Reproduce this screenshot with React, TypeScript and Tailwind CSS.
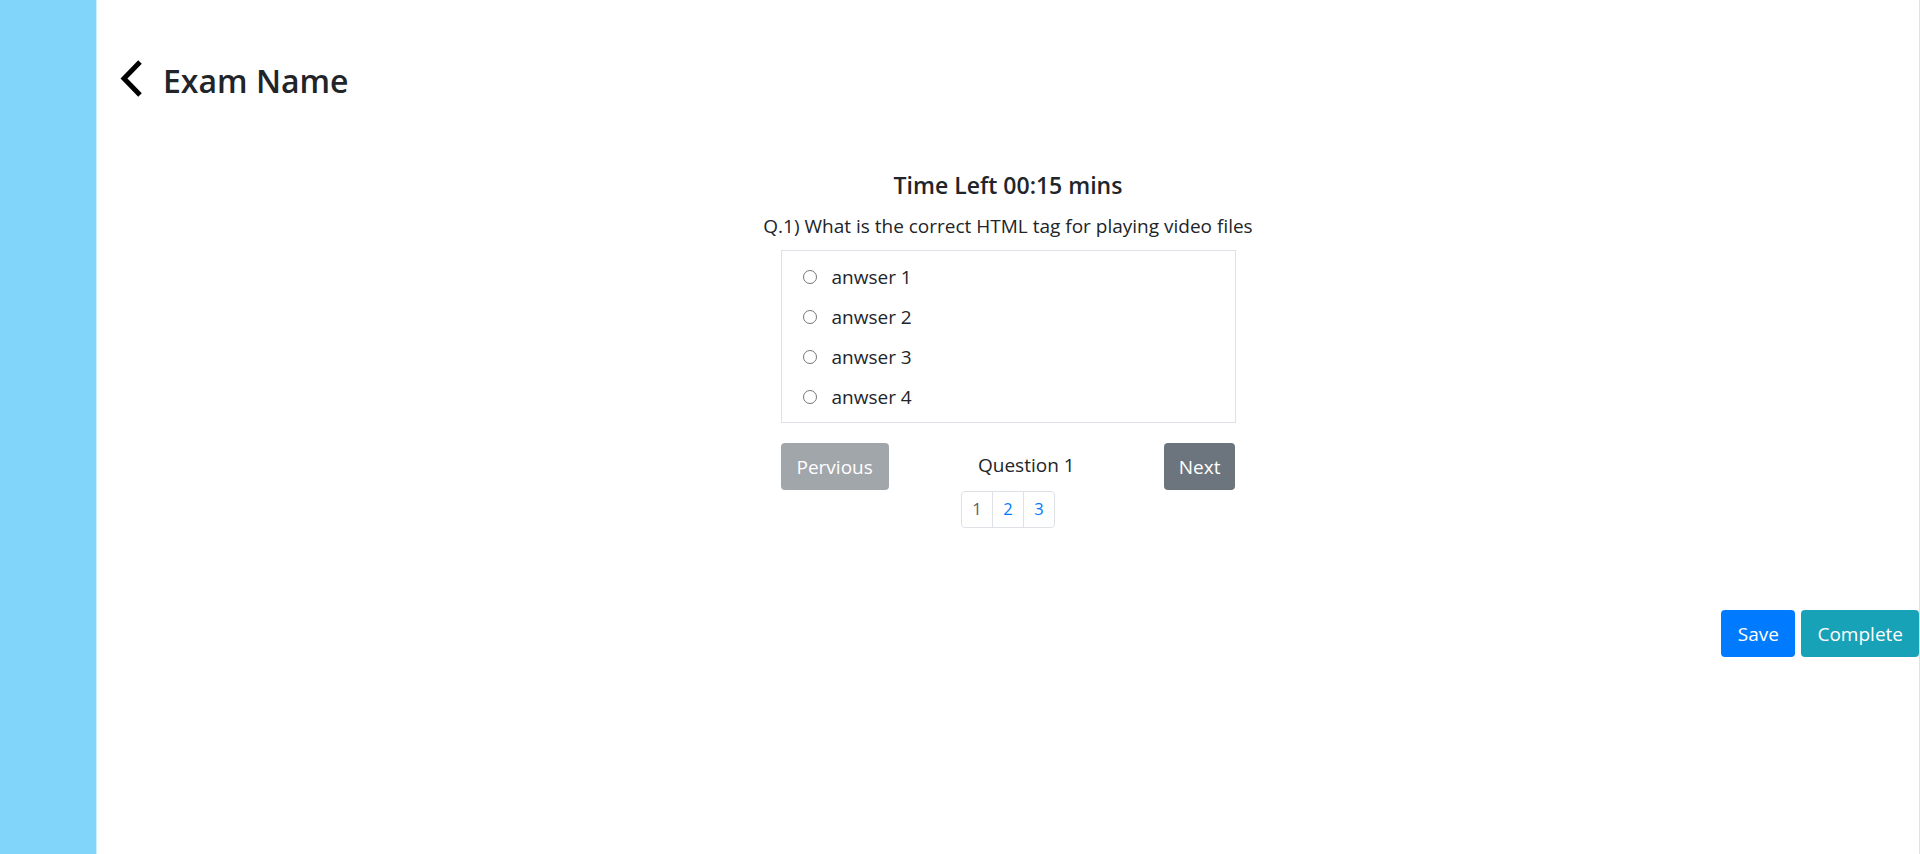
import React from "react";

const answers = ["anwser 1", "anwser 2", "anwser 3", "anwser 4"];

export default function App() {
  return (
    <div
      className="flex min-h-[854px] w-full bg-white text-[#212529]"
      style={{ fontFamily: '"Segoe UI", "Open Sans", sans-serif' }}
    >
      <aside className="w-[97px] shrink-0 border-r border-[#cdeefd] bg-[#81d4fa]" />
      <main className="flex-1 border-r border-[#dee2e6]">
        <header className="flex items-center pl-[22px] pt-[60px]">
          <svg width="24" height="42" viewBox="0 0 24 42" className="shrink-0">
            <polyline points="21,2 5,18.5 21,35" fill="none" stroke="#000" strokeWidth="5" strokeLinejoin="miter" />
          </svg>
          <h3 className="ml-[20px] text-[32px] font-semibold leading-[42px]">Exam Name</h3>
        </header>
        <section className="mx-auto mt-[68px] flex w-[455px] flex-col items-center">
          <h5 className="text-[23px] font-semibold leading-[30px]">Time Left 00:15 mins</h5>
          <p className="mt-[11px] whitespace-nowrap text-[19px] leading-[30px]">
            Q.1) What is the correct HTML tag for playing video files
          </p>
          <div className="mt-[9px] w-full border border-[#dee2e6] pb-[5px] pl-[21px] pt-[6px]">
            {answers.map((a) => (
              <label key={a} className="flex h-[40px] items-center">
                <span className="h-[14px] w-[14px] rounded-full border border-[#767676]" />
                <span className="ml-[15px] text-[19px] leading-[30px]">{a}</span>
              </label>
            ))}
          </div>
          <div className="mt-[20px] flex w-full items-start justify-between">
            <button className="h-[47px] rounded-[4px] bg-[#a1a6ab] px-[16px] text-[19px] leading-[30px] text-white">
              Pervious
            </button>
            <span className="pt-[7px] text-[19px] leading-[30px]">Question 1</span>
            <button className="h-[47px] rounded-[4px] bg-[#6c757d] px-[15px] text-[19px] leading-[30px] text-white">
              Next
            </button>
          </div>
          <nav className="mt-[1px] flex h-[37px] overflow-hidden rounded-[4px] border border-[#dee2e6] text-[16.5px]">
            <span className="flex w-[30px] items-center justify-center text-[#5a6168]">1</span>
            <span className="flex w-[31px] items-center justify-center border-l border-[#dee2e6] text-[#007bff]">2</span>
            <span className="flex w-[31px] items-center justify-center border-l border-[#dee2e6] text-[#007bff]">3</span>
          </nav>
        </section>
        <div className="mt-[82px] flex justify-end gap-[6px]">
          <button className="h-[47px] rounded-[4px] bg-[#007bff] px-[16.5px] text-[19px] leading-[30px] text-white">
            Save
          </button>
          <button className="h-[47px] rounded-[4px] bg-[#17a2b8] px-[16px] text-[19px] leading-[30px] text-white">
            Complete
          </button>
        </div>
      </main>
    </div>
  );
}
